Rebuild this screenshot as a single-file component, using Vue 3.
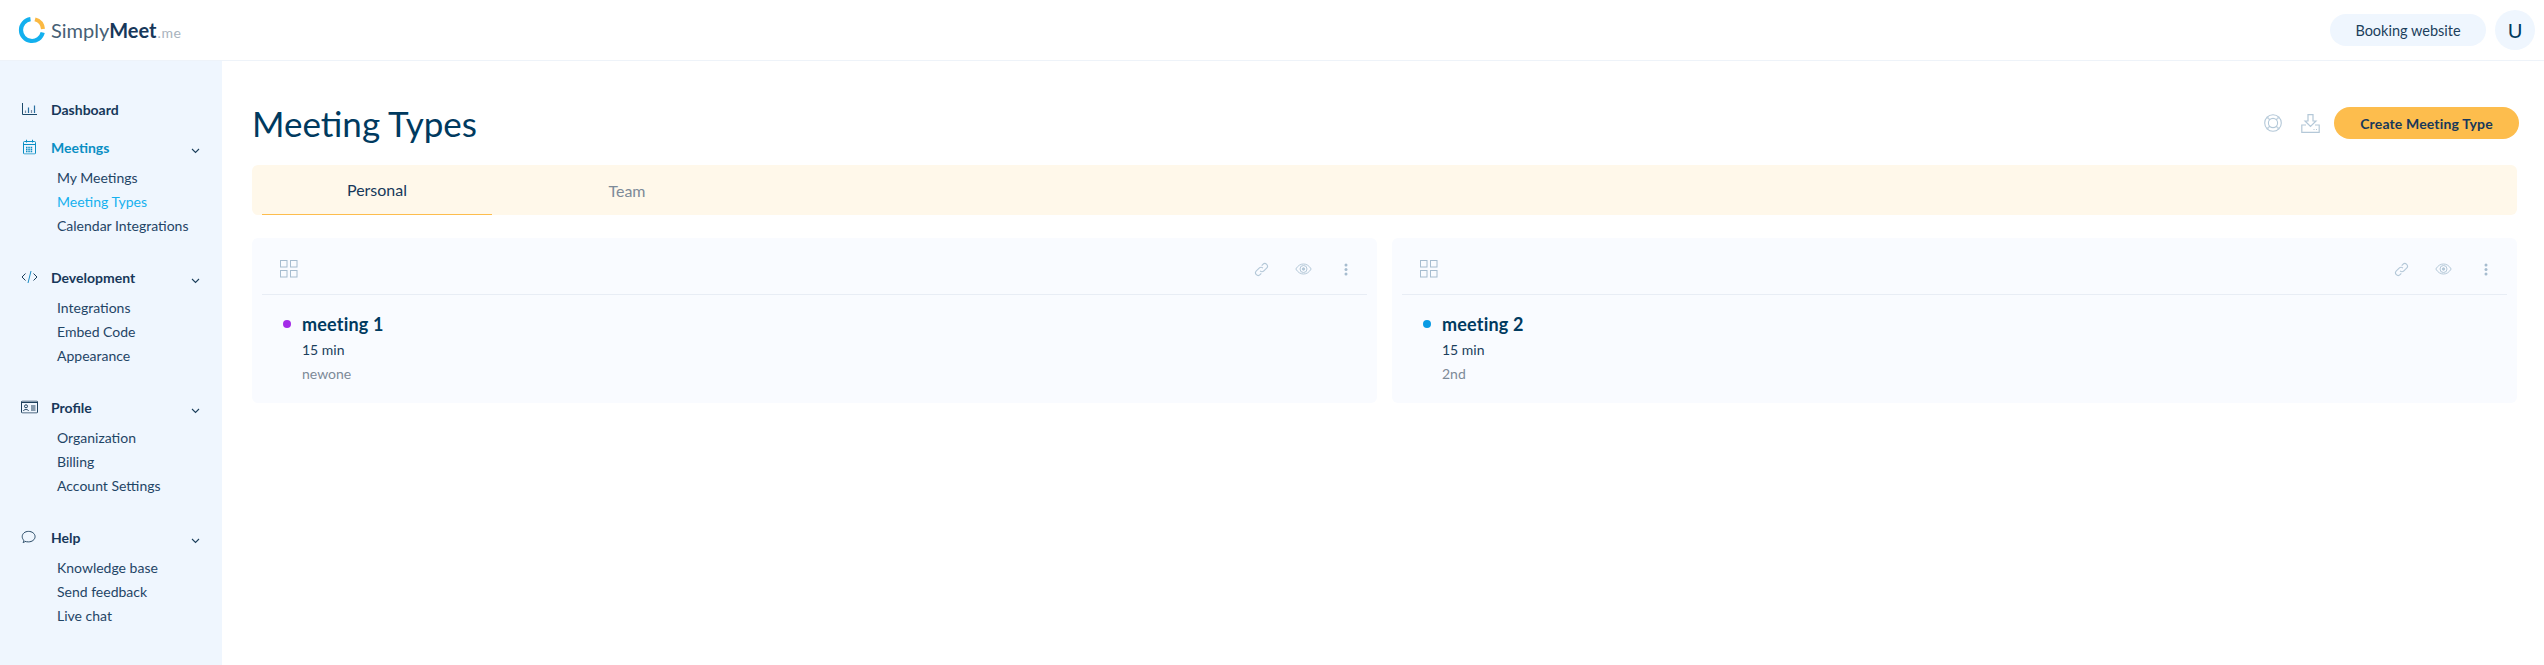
<script setup>
const groups = [
  { title: 'Meetings', icon: 'cal', active: true, items: ['My Meetings', 'Meeting Types', 'Calendar Integrations'] },
  { title: 'Development', icon: 'code', items: ['Integrations', 'Embed Code', 'Appearance'] },
  { title: 'Profile', icon: 'card', items: ['Organization', 'Billing', 'Account Settings'] },
  { title: 'Help', icon: 'chat', items: ['Knowledge base', 'Send feedback', 'Live chat'] },
]
const meetings = [
  { name: 'meeting 1', desc: 'newone', color: '#a42be8' },
  { name: 'meeting 2', desc: '2nd', color: '#0a9be4' },
]
</script>

<template>
  <div class="page">
    <header class="top">
      <div class="logo">
        <svg class="logo-mark" width="28" height="28" viewBox="0 0 28 28" fill="none">
          <path d="M12.500 3.100A11 11 0 1 0 24.700 16.500" stroke="#13b0ee" stroke-width="4.200"/>
          <path d="M17 3.400A11 11 0 0 1 25 13" stroke="#fbb942" stroke-width="4"/>
        </svg>
        <span class="logo-text">Simply<b>Meet</b><small>.me</small></span>
      </div>
      <div class="top-right">
        <button class="pill">Booking website</button>
        <div class="avatar">U</div>
      </div>
    </header>
    <div class="body">
      <aside class="side">
        <div class="nav-head dash">
          <svg class="nav-icon" width="15" height="12" viewBox="0 0 15 12" fill="none" stroke-width="1">
            <path d="M.5 0v11.500H15" stroke="#1c4a6b"/>
            <path d="M3.500 10V7.500M9.500 10V7" stroke="#7f8fa6" stroke-width="1.200"/>
            <path d="M6.500 10V4.500M12.500 10V2.500" stroke="#2a6fa0" stroke-width="1.200"/>
          </svg>
          <span>Dashboard</span>
        </div>
        <section v-for="g in groups" :key="g.title" class="group">
          <div class="nav-head" :class="{ on: g.active }">
            <svg v-if="g.icon === 'cal'" class="nav-icon cal" width="13" height="15" viewBox="0 0 13 15" fill="none" stroke="#0a8fc4" stroke-width="1">
              <rect x=".5" y="2" width="12" height="12.500" rx="1"/>
              <path d="M.5 5h12M3.500 0v3M9.500 0v3"/>
              <path d="M3 8h7M3 10h7M3 12h7" stroke-dasharray="1.500 .8" stroke-width="1.400"/>
            </svg>
            <svg v-else-if="g.icon === 'code'" class="nav-icon" width="17" height="14" viewBox="0 0 17 14" fill="none" stroke="#1c3f5c" stroke-width="1">
              <path d="M4.500 3.500 1 7l3.500 3.500M12.500 3.500 16 7l-3.500 3.500"/>
              <path d="M10 1 7 13" stroke="#1a8cc4"/>
            </svg>
            <svg v-else-if="g.icon === 'card'" class="nav-icon" width="17" height="13" viewBox="0 0 17 13" fill="none" stroke="#1c3f5c" stroke-width="1">
              <rect x=".5" y=".5" width="16" height="12" rx="1"/>
              <path d="M.5 2h16"/>
              <circle cx="5" cy="5.800" r="1.500"/>
              <path d="M2.500 10.500c0-2 5-2 5 0M10 5.500h4.500M10 7.500h4.500M10 9.500h4.500"/>
            </svg>
            <svg v-else class="nav-icon" width="15" height="14" viewBox="0 0 16 14" fill="none" stroke="#1c3f5c" stroke-width="1">
              <path d="M2.200 12.800c1 0 1.600-.5 2.100-1.100C5.200 12 6.500 12.200 8 12.200c3.800 0 7-2.400 7-5.600S11.800 1 8 1 1.300 3.400 1.300 6.600c0 1.500.6 2.800 1.700 3.800-.1 1-.4 1.800-.8 2.400Z"/>
            </svg>
            <span>{{ g.title }}</span>
            <svg class="chev" width="9" height="6" viewBox="0 0 9 6" fill="none" stroke="#1c3f5c" stroke-width="1.100">
              <path d="M1 1l3.500 3.500L8 1"/>
            </svg>
          </div>
          <a v-for="i in g.items" :key="i" class="sub" :class="{ cur: i === 'Meeting Types' }">{{ i }}</a>
        </section>
      </aside>
      <main class="main">
        <div class="title-row">
          <h1>Meeting Types</h1>
          <div class="actions">
            <svg class="buoy" width="18" height="18" viewBox="0 0 18 18" fill="none" stroke="#b4c8d8" stroke-width="1.100">
              <circle cx="9" cy="9" r="8.300"/>
              <circle cx="9" cy="9" r="4.600"/>
              <path d="M3.500 2.800l2.600 3.100M2.800 3.500l3.100 2.600M14.500 2.800l-2.600 3.100M15.200 3.500l-3.100 2.600M3.500 15.200l2.600-3.100M2.800 14.500l3.100-2.600M14.500 15.200l-2.600-3.100M15.200 14.500l-3.100-2.600" stroke-width=".9"/>
            </svg>
            <svg class="dl" width="19" height="19" viewBox="0 0 19 19" fill="none" stroke="#b4c8d8" stroke-width="1.200">
              <path d="M7 .6h5v6.400h3l-5.500 5.500L4 7h3z"/>
              <path d="M5 11H.8v7.400h17.400V11H14"/>
              <path d="M12.500 15.500h1M15 15.500h1"/>
            </svg>
            <button class="create">Create Meeting Type</button>
          </div>
        </div>
        <nav class="tabs">
          <div class="tab active">Personal</div>
          <div class="tab">Team</div>
        </nav>
        <div class="cards">
          <article v-for="m in meetings" :key="m.name" class="card">
            <div class="card-top">
              <svg width="18" height="18" viewBox="0 0 18 18" fill="none" stroke="#a6bccf" stroke-width="1">
                <rect x=".5" y=".5" width="6.500" height="6.500"/>
                <rect x="10.500" y=".5" width="6.500" height="6.500"/>
                <rect x=".5" y="10.500" width="6.500" height="6.500"/>
                <rect x="10.500" y="10.500" width="6.500" height="6.500"/>
              </svg>
              <div class="card-icons">
                <svg width="15" height="15" viewBox="0 0 16 16" fill="none" stroke="#b4c8d8" stroke-width="1.200">
                  <path d="M6.500 9.500a2.800 2.800 0 0 0 4 0l3-3a2.800 2.800 0 0 0-4-4L8.200 3.800"/>
                  <path d="M9.500 6.500a2.800 2.800 0 0 0-4 0l-3 3a2.800 2.800 0 0 0 4 4l1.300-1.300"/>
                </svg>
                <svg width="17" height="12" viewBox="0 0 17 12" fill="none" stroke="#b4c8d8" stroke-width="1">
                  <path d="M.8 6C3 2.500 5.500 1 8.500 1s5.500 1.500 7.700 5c-2.200 3.500-4.700 5-7.700 5S3 9.500.8 6Z"/>
                  <circle cx="8.500" cy="6" r="3.500"/>
                  <circle cx="8.500" cy="6" r="1.200" fill="#b4c8d8"/>
                </svg>
                <svg class="dots" width="4" height="13" viewBox="0 0 4 13" fill="#a6bccf">
                  <circle cx="2" cy="2" r="1.500"/>
                  <circle cx="2" cy="6.500" r="1.500"/>
                  <circle cx="2" cy="11" r="1.500"/>
                </svg>
              </div>
            </div>
            <div class="card-body">
              <div class="name"><i class="dot" :style="{ background: m.color }"></i>{{ m.name }}</div>
              <div class="dur">15 min</div>
              <div class="desc">{{ m.desc }}</div>
            </div>
          </article>
        </div>
      </main>
    </div>
  </div>
</template>

<style>
html, body { margin: 0; background: #fff; }
</style>

<style scoped>
.page { width: 2544px; height: 665px; font-family: "Lato", "Open Sans", sans-serif; color: #1c3f5c; display: flex; flex-direction: column; overflow: hidden; }
.top { height: 60px; flex: none; display: flex; align-items: center; justify-content: space-between; padding: 0 9px 0 18px; border-bottom: 1px solid #eef3f9; box-sizing: content-box; }
.logo { display: flex; align-items: center; gap: 5px; }
.logo-mark { display: block; }
.logo-text { font-size: 20px; color: #475f75; font-weight: 400; }
.logo-text b { font-weight: 700; color: #17385a; }
.logo-text small { font-size: 14px; color: #a8b3bd; margin-left: 1px; letter-spacing: .6px; }
.top-right { display: flex; align-items: center; gap: 9px; }
.pill { height: 32px; width: 156px; border: 0; border-radius: 16px; background: #eff6fe; font: 14.500px "Lato", sans-serif; color: #1c3f5c; padding: 0; }
.avatar { width: 40px; height: 40px; border-radius: 50%; background: #eff6fe; display: flex; align-items: center; justify-content: center; font-size: 20px; color: #003a5f; }
.body { flex: 1; display: flex; min-height: 0; }
.side { width: 222px; flex: none; background: #eff6fe; padding-top: 36px; box-sizing: border-box; }
.nav-head { display: flex; align-items: center; height: 24px; font-size: 14px; font-weight: 700; color: #17385a; padding-left: 51px; position: relative; }
.nav-head.dash { margin-bottom: 14px; }
.nav-head.on { color: #0a8fc4; }
.nav-icon { position: absolute; left: 21px; top: 50%; transform: translateY(-50%); }
.nav-icon.cal { left: 23px; }
.dash .nav-icon { left: 22px; }
.chev { position: absolute; left: 191px; top: 13px; }
.group { margin-bottom: 27px; }
.nav-head + .sub { margin-top: 7px; }
.sub { display: block; height: 24px; line-height: 24px; font-size: 14px; padding-left: 57px; color: #1f4566; }
.sub.cur { color: #16b1ee; }
.main { flex: 1; min-width: 0; padding: 0 27px 0 30px; }
.title-row { height: 104px; display: flex; justify-content: space-between; box-sizing: border-box; }
h1 { margin: 44px 0 0; font-size: 35px; font-weight: 400; color: #003a5f; line-height: 36px; }
.actions { display: flex; align-items: center; height: 32px; margin: 46px -2px 0 0; }
.buoy { margin-right: 19px; }
.dl { margin-right: 14px; }
.create { width: 185px; height: 32px; border: 0; border-radius: 16px; background: #fdbd4d; font: 700 14px "Lato", sans-serif; letter-spacing: .15px; color: #17385a; padding: 0; }
.tabs { height: 50px; background: #fff8ea; border-radius: 6px; display: flex; gap: 20px; padding-left: 10px; }
.tab { width: 230px; height: 50px; box-sizing: border-box; display: flex; align-items: center; justify-content: center; font-size: 16px; color: #7d8a98; }
.tab.active { color: #17385a; border-bottom: 1px solid #fdbd4d; }
.cards { display: grid; grid-template-columns: 1fr 1fr; gap: 15px; margin-top: 23px; }
.card { background: #f9fbff; border-radius: 6px; height: 165px; padding: 0 10px; box-sizing: border-box; }
.card-top { height: 57px; border-bottom: 1px solid #e8edf5; display: flex; align-items: center; justify-content: space-between; padding: 6px 19px 0 18px; box-sizing: border-box; }
.card-icons { display: flex; align-items: center; gap: 26px; }
.dots { margin-left: 6px; }
.card-body { padding: 16px 0 0 40px; }
.name { font-size: 18px; font-weight: 700; letter-spacing: .2px; color: #003a5f; position: relative; line-height: 26px; }
.dot { position: absolute; left: -19px; top: 9px; width: 8px; height: 8px; border-radius: 50%; }
.dur { font-size: 14px; color: #1c3f5c; line-height: 24px; margin-top: 1px; }
.desc { font-size: 14px; color: #7d8a98; line-height: 24px; }
</style>
